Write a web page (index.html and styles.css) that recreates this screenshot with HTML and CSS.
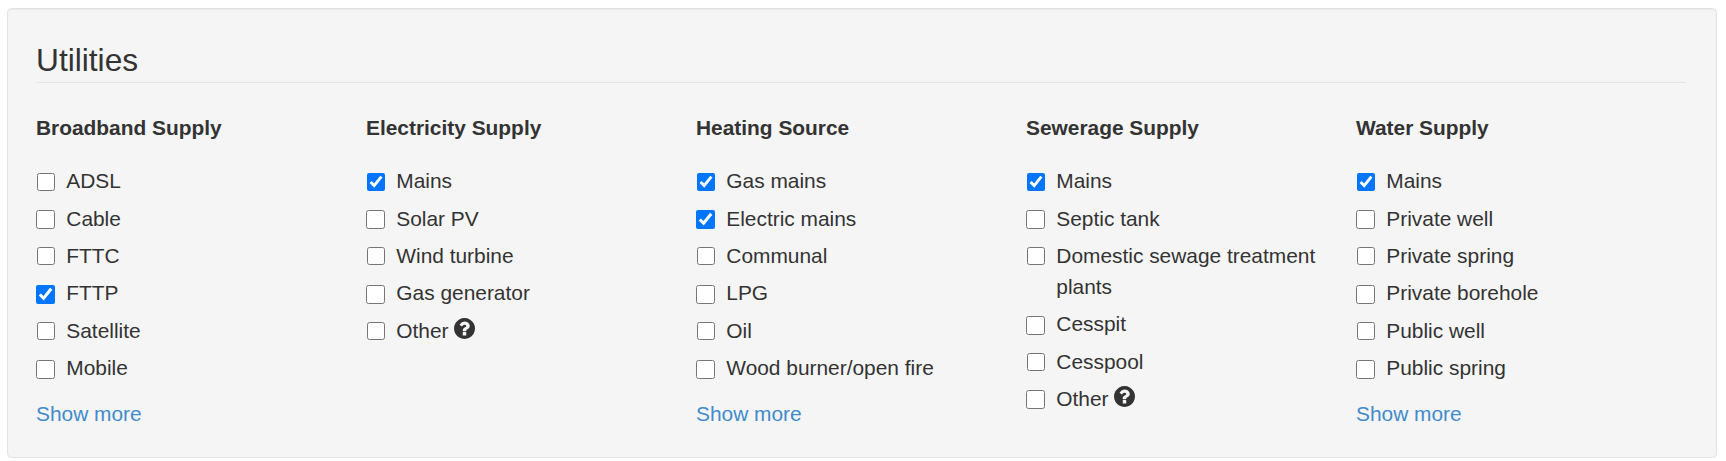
FILE: index.html
```html
<!DOCTYPE html>
<html lang="en">
<head>
    <meta charset="UTF-8">
    <title>Utilities</title>
    <link rel="stylesheet" href="styles.css">
</head>
<body>
<svg class="defs" width="0" height="0">
    <symbol id="help" viewBox="128 128 1536 1536">
        <path d="M1024 1376v-192q0-14-9-23t-23-9h-192q-14 0-23 9t-9 23v192q0 14 9 23t23 9h192q14 0 23-9t9-23zm256-672q0-88-55.5-163t-138.5-116-170-41q-243 0-371 213-15 24 8 42l132 100q7 6 19 6 16 0 25-12 53-68 86-92 34-24 86-24 48 0 85.5 26t37.5 59q0 38-20 61t-68 45q-63 28-115.5 86.5t-52.5 125.5v36q0 14 9 23t23 9h192q14 0 23-9t9-23q0-19 21.5-49.5t54.5-49.5q32-18 49-28.5t46-35 44.5-48 28-60.5 12.5-81zm384 192q0 209-103 385.5t-279.5 279.5-385.5 103-385.5-103-279.5-279.5-103-385.5 103-385.5 279.5-279.5 385.5-103 385.5 103 279.5 279.5 103 385.5z"/>
    </symbol>
</svg>
<section class="well">
    <h2>Utilities</h2>
    <div class="columns">
        <div class="column">
            <h3>Broadband Supply</h3>
            <ul>
                <li><label><input type="checkbox"><span>ADSL</span></label></li>
                <li><label><input type="checkbox"><span>Cable</span></label></li>
                <li><label><input type="checkbox"><span>FTTC</span></label></li>
                <li><label><input type="checkbox" checked><span>FTTP</span></label></li>
                <li><label><input type="checkbox"><span>Satellite</span></label></li>
                <li><label><input type="checkbox"><span>Mobile</span></label></li>
            </ul>
            <a class="more" href="#">Show more</a>
        </div>
        <div class="column">
            <h3>Electricity Supply</h3>
            <ul>
                <li><label><input type="checkbox" checked><span>Mains</span></label></li>
                <li><label><input type="checkbox"><span>Solar PV</span></label></li>
                <li><label><input type="checkbox"><span>Wind turbine</span></label></li>
                <li><label><input type="checkbox"><span>Gas generator</span></label></li>
                <li><label><input type="checkbox"><span>Other <svg class="help"><use href="#help"/></svg></span></label></li>
            </ul>
        </div>
        <div class="column">
            <h3>Heating Source</h3>
            <ul>
                <li><label><input type="checkbox" checked><span>Gas mains</span></label></li>
                <li><label><input type="checkbox" checked><span>Electric mains</span></label></li>
                <li><label><input type="checkbox"><span>Communal</span></label></li>
                <li><label><input type="checkbox"><span>LPG</span></label></li>
                <li><label><input type="checkbox"><span>Oil</span></label></li>
                <li><label><input type="checkbox"><span>Wood burner/open fire</span></label></li>
            </ul>
            <a class="more" href="#">Show more</a>
        </div>
        <div class="column">
            <h3>Sewerage Supply</h3>
            <ul>
                <li><label><input type="checkbox" checked><span>Mains</span></label></li>
                <li><label><input type="checkbox"><span>Septic tank</span></label></li>
                <li><label><input type="checkbox"><span>Domestic sewage treatment plants</span></label></li>
                <li><label><input type="checkbox"><span>Cesspit</span></label></li>
                <li><label><input type="checkbox"><span>Cesspool</span></label></li>
                <li><label><input type="checkbox"><span>Other <svg class="help"><use href="#help"/></svg></span></label></li>
            </ul>
        </div>
        <div class="column">
            <h3>Water Supply</h3>
            <ul>
                <li><label><input type="checkbox" checked><span>Mains</span></label></li>
                <li><label><input type="checkbox"><span>Private well</span></label></li>
                <li><label><input type="checkbox"><span>Private spring</span></label></li>
                <li><label><input type="checkbox"><span>Private borehole</span></label></li>
                <li><label><input type="checkbox"><span>Public well</span></label></li>
                <li><label><input type="checkbox"><span>Public spring</span></label></li>
            </ul>
            <a class="more" href="#">Show more</a>
        </div>
    </div>
</section>
</body>
</html>
```

FILE: styles.css
```css
*{
    box-sizing: border-box;
    margin: 0;
    padding: 0;
}

body{
    padding: 8px 9px 0 7px;
    font-family: "Liberation Sans", Arial, sans-serif;
    font-size: 20.9px;
    line-height: 30.8px;
    color: #333333;
    background: #ffffff;
}
.defs{
    position: absolute;
}

.well{
    height: 450px;
    padding: 26px 30px 0 28px;
    background: #f5f5f5;
    border: 1px solid #e3e3e3;
    border-radius: 4.4px;
    box-shadow: inset 0 1px 1px rgba(0,0,0,.05);
}
.well > h2{
    height: 48px;
    padding-top: 8px;
    font-size: 31.7px;
    line-height: 34px;
    font-weight: normal;
    border-bottom: 1px solid #e5e5e5;
}

.columns{
    display: grid;
    grid-template-columns: repeat(5, 330px);
    padding-top: 30px;
}
.column{
    padding-right: 15px;
}
.column > h3{
    margin-bottom: 22.4px;
    font-size: 20.9px;
    line-height: 30.8px;
    font-weight: bold;
}
.column > ul{
    display: flex;
    flex-direction: column;
    gap: 6.6px;
    list-style: none;
}
.column label{
    display: flex;
    align-items: flex-start;
    gap: 11px;
}
.column input{
    flex: none;
    width: 18px;
    height: 18px;
    margin: 6.4px 0.3px 0 1px;
}
/* every second box comes out a pixel larger in the reference */
.column li:nth-child(even) input{
    width: 19px;
    height: 19px;
    margin: 6.4px 0.3px 0 0;
}
.help{
    width: 21px;
    height: 21px;
    vertical-align: -1px;
    fill: #333333;
}
.more{
    display: block;
    margin-top: 15.4px;
    color: #428bca;
    text-decoration: none;
}
```
